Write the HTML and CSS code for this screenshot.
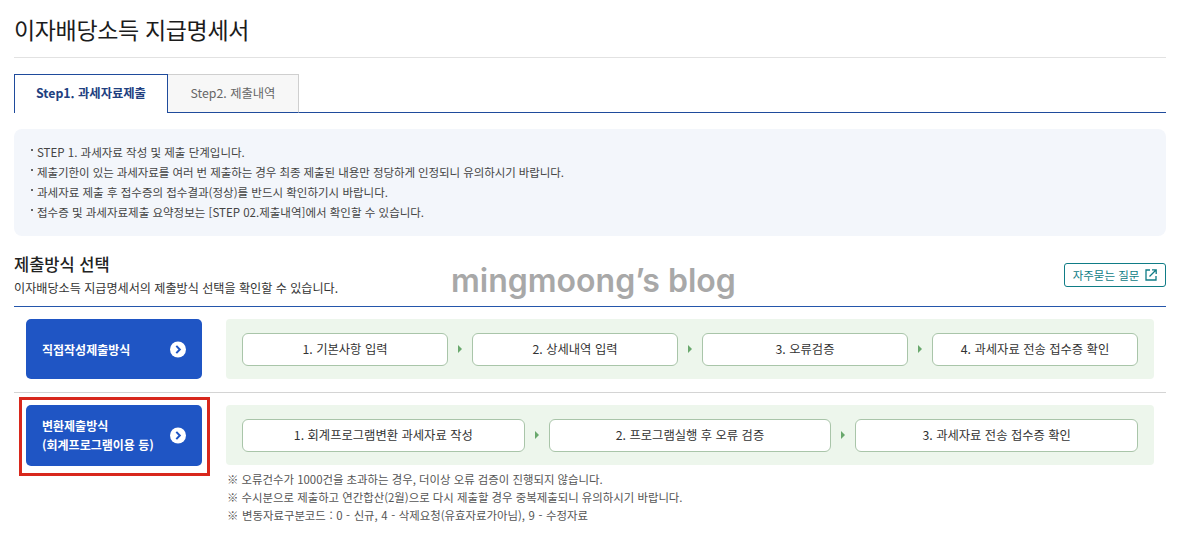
FILE: index.html
```html
<!DOCTYPE html>
<html lang="ko">
<head>
<meta charset="utf-8">
<title>이자배당소득 지급명세서</title>
<link rel="stylesheet" href="styles.css">
</head>
<body>
<main class="page">
  <h1 class="title">이자배당소득 지급명세서</h1>
  <div class="tabs">
    <div class="tab tab-active">Step1. 과세자료제출</div>
    <div class="tab">Step2. 제출내역</div>
  </div>
  <ul class="info">
    <li>STEP 1. 과세자료 작성 및 제출 단계입니다.</li>
    <li class="tight">제출기한이 있는 과세자료를 여러 번 제출하는 경우 최종 제출된 내용만 정당하게 인정되니 유의하시기 바랍니다.</li>
    <li>과세자료 제출 후 접수증의 접수결과(정상)를 반드시 확인하기시 바랍니다.</li>
    <li>접수증 및 과세자료제출 요약정보는 [STEP 02.제출내역]에서 확인할 수 있습니다.</li>
  </ul>
  <div class="section-head">
    <div>
      <h2 class="section-title">제출방식 선택</h2>
      <p class="section-sub">이자배당소득 지급명세서의 제출방식 선택을 확인할 수 있습니다.</p>
    </div>
    <a class="faq">자주묻는 질문
      <svg class="faq-icon" viewBox="0 0 12 12" width="12" height="12" fill="none" stroke="#0f7c86" stroke-width="1.3">
        <path d="M5 1H1v10h10V7"/><path d="M4.5 7.5 11 1M7 .8h4.2V5"/>
      </svg>
    </a>
  </div>
  <div class="watermark">mingmoong’s blog</div>
  <section class="row row-first">
    <div class="method">
      <span>직접작성제출방식</span>
      <svg class="go" viewBox="0 0 16 16" width="16" height="17"><circle cx="8" cy="8" r="8" fill="#fff"/><path d="M6.3 4.4 9.8 8l-3.5 3.6" fill="none" stroke="#1f55c4" stroke-width="2"/></svg>
    </div>
    <div class="flow">
      <div class="step">1. 기본사항 입력</div><i class="arrow"></i>
      <div class="step">2. 상세내역 입력</div><i class="arrow"></i>
      <div class="step">3. 오류검증</div><i class="arrow"></i>
      <div class="step">4. 과세자료 전송 접수증 확인</div>
    </div>
  </section>
  <section class="row">
    <div class="method-wrap">
      <div class="method method-tall">
        <span>변환제출방식<br>(회계프로그램이용 등)</span>
        <svg class="go" viewBox="0 0 16 16" width="16" height="17"><circle cx="8" cy="8" r="8" fill="#fff"/><path d="M6.3 4.4 9.8 8l-3.5 3.6" fill="none" stroke="#1f55c4" stroke-width="2"/></svg>
      </div>
      <div class="highlight"></div>
    </div>
    <div class="flow-col">
      <div class="flow">
        <div class="step">1. 회계프로그램변환 과세자료 작성</div><i class="arrow"></i>
        <div class="step">2. 프로그램실행 후 오류 검증</div><i class="arrow"></i>
        <div class="step">3. 과세자료 전송 접수증 확인</div>
      </div>
      <ul class="notes">
        <li>※ 오류건수가 1000건을 초과하는 경우, 더이상 오류 검증이 진행되지 않습니다.</li>
        <li>※ 수시분으로 제출하고 연간합산(2월)으로 다시 제출할 경우 중복제출되니 유의하시기 바랍니다.</li>
        <li class="wide">※ 변동자료구분코드 : 0 - 신규, 4 - 삭제요청(유효자료가아님), 9 - 수정자료</li>
      </ul>
    </div>
  </section>
</main>
</body>
</html>
```
FILE: styles.css
```css
* { box-sizing: border-box; }
html, body { margin: 0; padding: 0; background: #fff; }
body {
  font-family: "Noto Sans CJK KR", "Noto Sans", sans-serif;
  color: #333;
  height: 534px;
  overflow: hidden;
}
.page { position: relative; width: 1152px; margin-left: 14px; }
ul { list-style: none; margin: 0; padding: 0; }
.title {
  margin: 0;
  height: 58px;
  padding-top: 12px;
  font-size: 23px;
  line-height: 34px;
  font-weight: 400;
  color: #1c1c1c;
  letter-spacing: -0.35px;
  border-bottom: 1px solid #e2e2e2;
}
.tabs {
  display: flex;
  margin-top: 16px;
  height: 39px;
  border-bottom: 1px solid #1f4b9c;
}
.tab {
  width: 131px;
  height: 39px;
  text-align: center;
  font-size: 12.3px;
  line-height: 36px;
  color: #666;
  background: #f7f7f7;
  border: 1px solid #cfcfcf;
  border-bottom: 1px solid #1f4b9c;
  border-left: 0;
}
.tab-active {
  width: 154px;
  color: #21407f;
  font-weight: 700;
  background: #fff;
  border: 1px solid #1f4b9c;
  border-bottom: 0;
}
.info {
  margin-top: 16px;
  height: 107px;
  padding: 13px 0 0 23px;
  background: #f3f6fb;
  border-radius: 8px;
  font-size: 11.5px;
  line-height: 20px;
  color: #444;
}
.info li { position: relative; }
.info .tight { letter-spacing: -0.08px; }
.info li::before {
  content: "";
  position: absolute;
  left: -6px;
  top: 7px;
  width: 2px;
  height: 2px;
  background: #666;
}
.section-head {
  display: flex;
  justify-content: space-between;
  align-items: flex-start;
  margin-top: 17px;
  height: 54px;
  border-bottom: 1px solid #2456ab;
}
.section-title {
  margin: 0;
  font-size: 16.5px;
  line-height: 22px;
  font-weight: 500;
  color: #222;
}
.section-sub {
  margin: 4px 0 0;
  font-size: 12.1px;
  line-height: 18px;
  color: #333;
}
.faq {
  display: flex;
  align-items: center;
  justify-content: center;
  gap: 6px;
  width: 102px;
  height: 24px;
  margin-top: 10px;
  font-size: 11.5px;
  color: #0f7c86;
  border: 1px solid #0f7c86;
  border-radius: 3px;
}
.faq-icon { flex: none; }
.watermark {
  position: absolute;
  left: 437px;
  top: 259px;
  font-family: "Inter", sans-serif;
  font-size: 32px;
  line-height: 44px;
  font-weight: 600;
  letter-spacing: 0;
  color: #a8a8a8;
  white-space: nowrap;
}
.row {
  display: flex;
  gap: 24px;
  padding: 12px 12px 0;
}
.row-first { height: 86px; border-bottom: 1px solid #d4d4d4; }
.method {
  flex: none;
  display: flex;
  align-items: center;
  justify-content: space-between;
  width: 176px;
  height: 60px;
  padding: 1px 16px 0;
  background: #1f55c4;
  border-radius: 5px;
  font-size: 12px;
  line-height: 19px;
  font-weight: 700;
  color: #fff;
}
.method-tall { height: 61px; padding: 0 16px 1px; }
.go { flex: none; }
.method-wrap { position: relative; flex: none; }
.highlight {
  position: absolute;
  left: -7px;
  top: -8px;
  width: 191px;
  height: 79px;
  border: 3px solid #d8281c;
}
.flow-col { flex: 1; min-width: 0; }
.flow {
  flex: 1;
  display: flex;
  align-items: center;
  height: 60px;
  padding: 0 16px;
  background: #edf6ec;
  border-radius: 4px;
}
.step {
  flex: 1;
  height: 33px;
  text-align: center;
  font-size: 12.3px;
  line-height: 30px;
  color: #333;
  background: #fff;
  border: 1px solid #a9c5a9;
  border-radius: 6px;
}
.arrow {
  flex: none;
  width: 24px;
  height: 8px;
  position: relative;
}
.arrow::after {
  content: "";
  position: absolute;
  left: 10px;
  top: 0;
  border-left: 4px solid #69a86c;
  border-top: 4px solid transparent;
  border-bottom: 4px solid transparent;
}
.notes {
  margin-top: 5px;
  padding-left: 1px;
  font-size: 11.4px;
  line-height: 18px;
  color: #555;
}
.notes .wide { word-spacing: 0.4px; }
```
